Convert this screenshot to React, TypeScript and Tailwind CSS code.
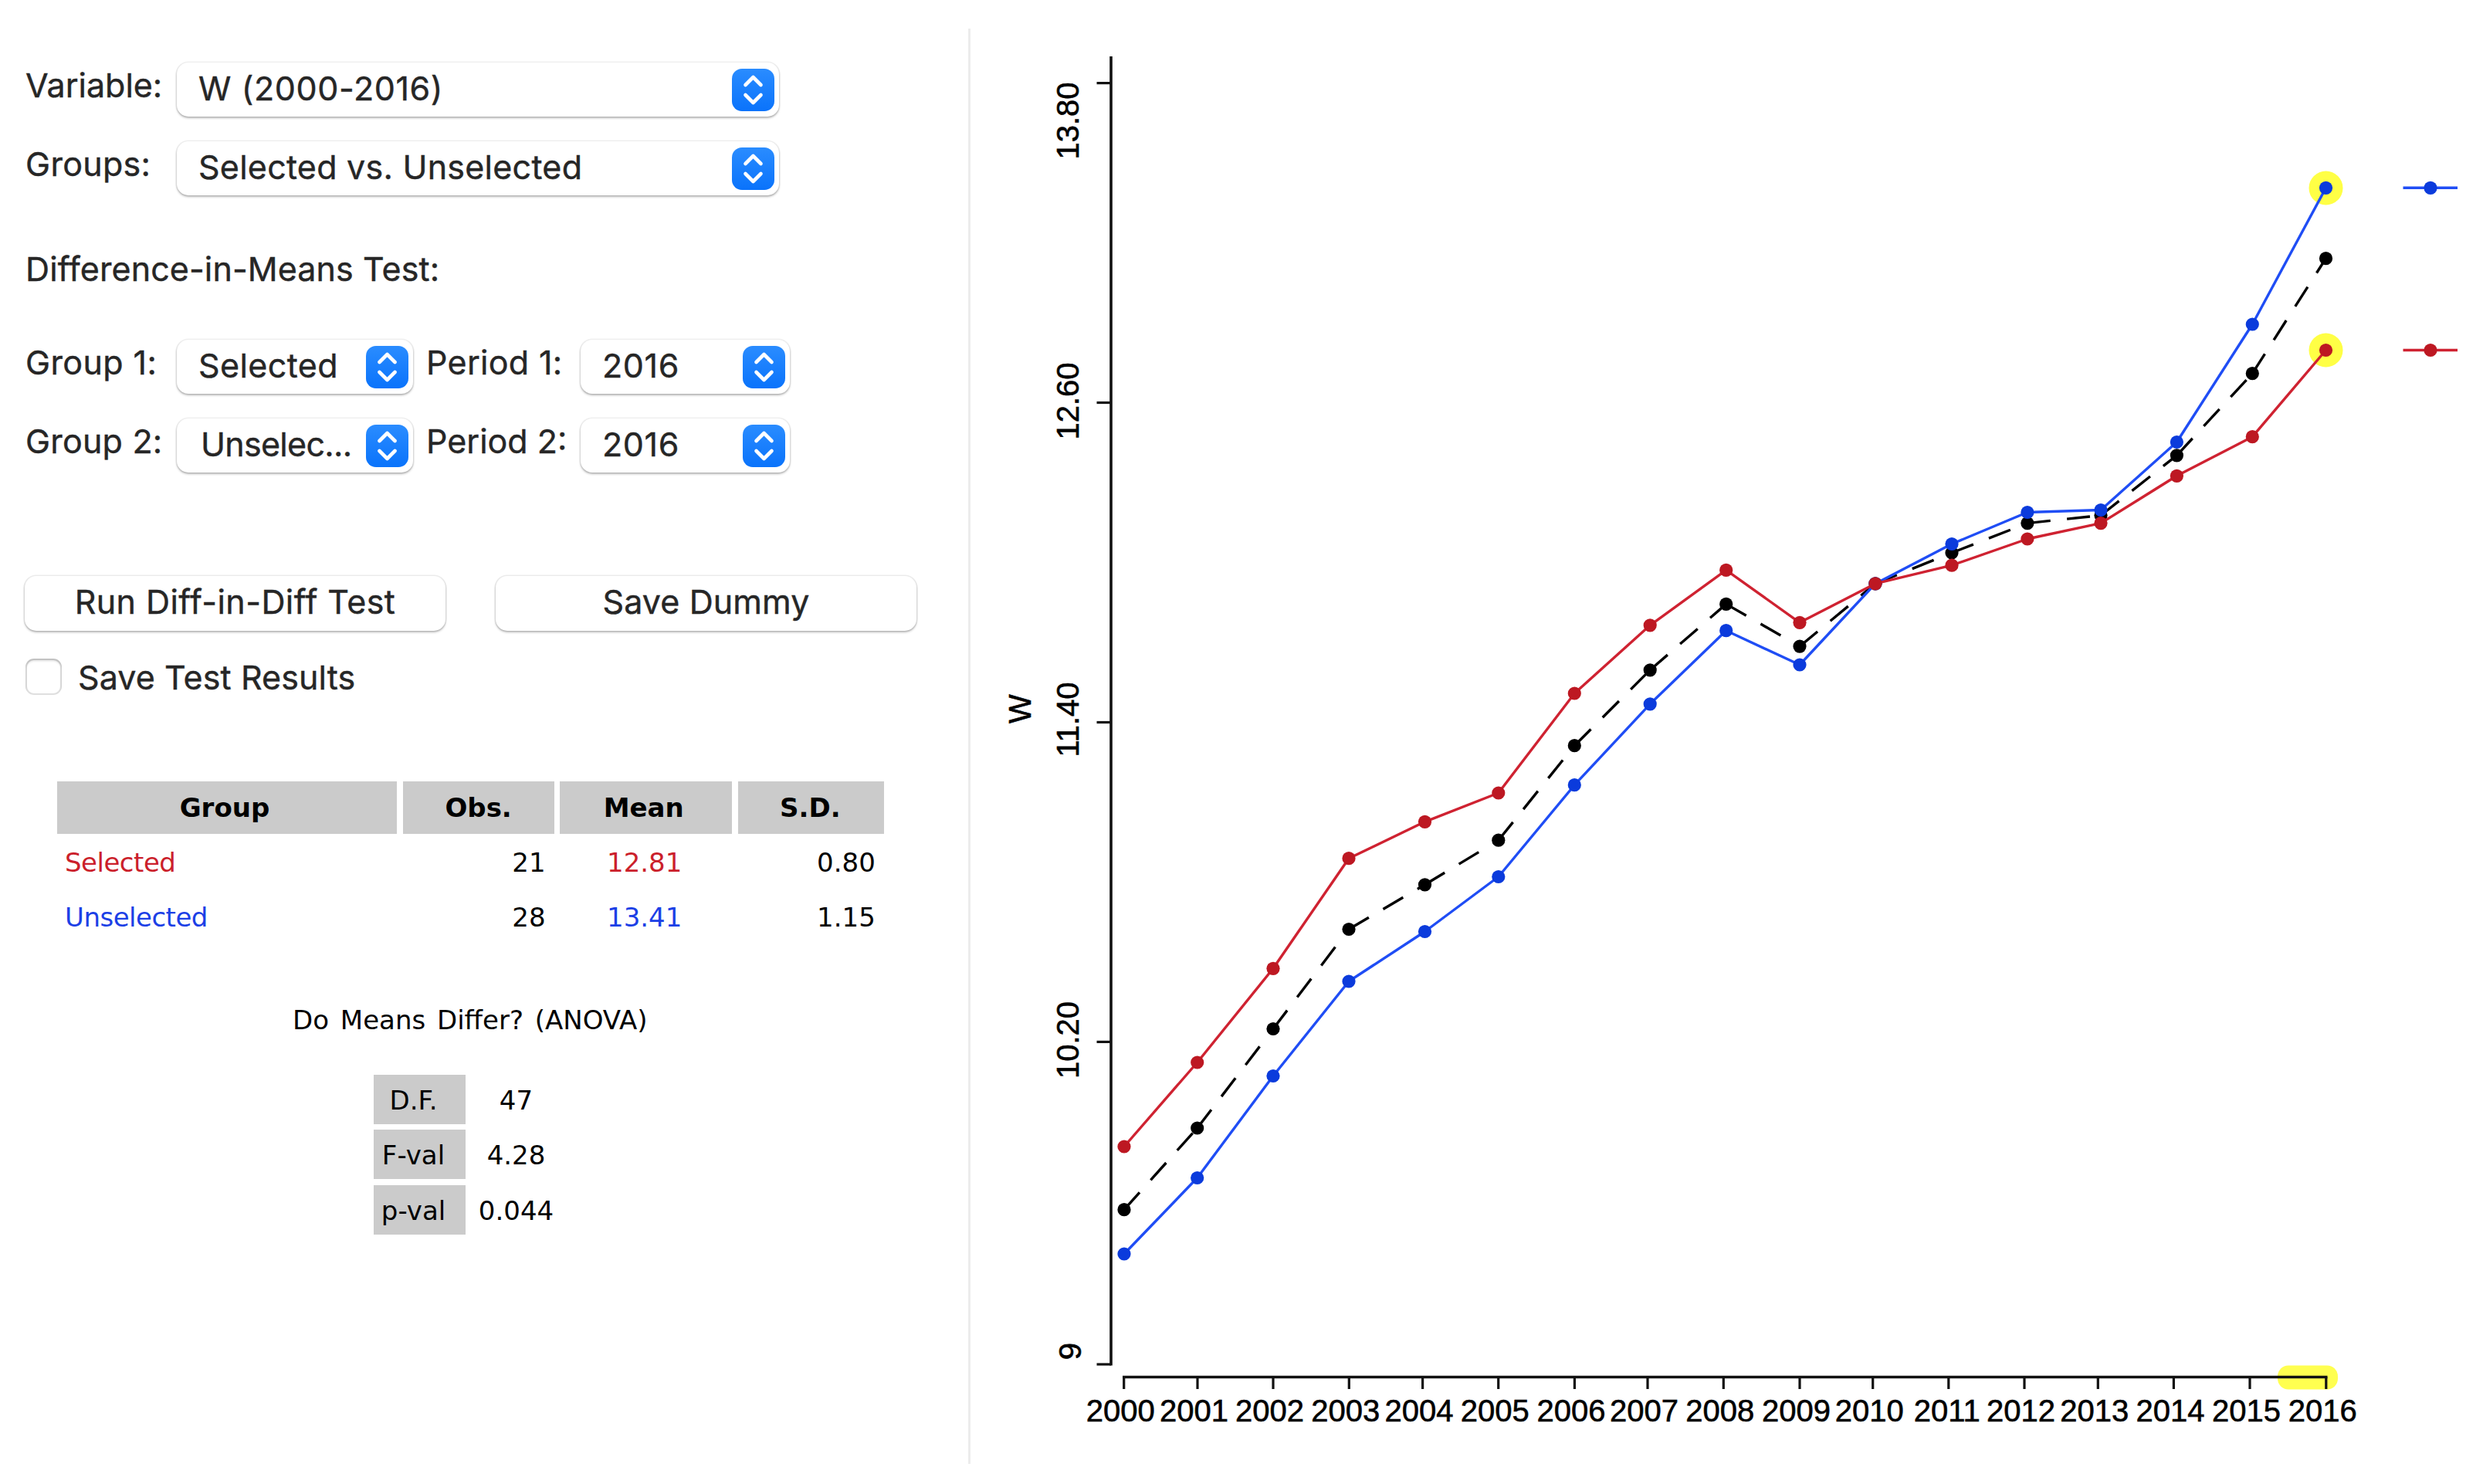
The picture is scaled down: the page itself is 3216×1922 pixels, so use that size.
import React, { FC, ReactNode } from "react";

const years = [
  { label: "2000", x: 1456, tick: 1455.7, selected: 1485, all: 1566.7, unselected: 1624 },
  { label: "2001", x: 1550.7, tick: 1551, selected: 1376, all: 1461, unselected: 1525.5 },
  { label: "2002", x: 1649, tick: 1649, selected: 1254.3, all: 1332.5, unselected: 1393.5 },
  { label: "2003", x: 1747, tick: 1747.3, selected: 1111.7, all: 1203.5, unselected: 1271 },
  { label: "2004", x: 1845.5, tick: 1842.6, selected: 1064.3, all: 1145.8, unselected: 1206.5 },
  { label: "2005", x: 1940.8, tick: 1940.7, selected: 1027, all: 1088.2, unselected: 1135.5 },
  { label: "2006", x: 2039.3, tick: 2039.4, selected: 898, all: 965.7, unselected: 1016.7 },
  { label: "2007", x: 2137.2, tick: 2134, selected: 809.8, all: 867.8, unselected: 911.8 },
  { label: "2008", x: 2235.7, tick: 2232.3, selected: 738.4, all: 782.4, unselected: 816.7 },
  { label: "2009", x: 2331, tick: 2331, selected: 806.3, all: 837.1, unselected: 861 },
  { label: "2010", x: 2429, tick: 2425.7, selected: 755.9, all: 755.9, unselected: 755.9 },
  { label: "2011", x: 2528, tick: 2523.8, selected: 732.2, all: 716, unselected: 704.5 },
  { label: "2012", x: 2625.9, tick: 2622, selected: 698, all: 677.6, unselected: 663.5 },
  { label: "2013", x: 2721, tick: 2717.3, selected: 677.6, all: 667.5, unselected: 660.5 },
  { label: "2014", x: 2819.4, tick: 2815.4, selected: 616.3, all: 589.8, unselected: 572.5 },
  { label: "2015", x: 2917.3, tick: 2914, selected: 565.7, all: 483.7, unselected: 420 },
  { label: "2016", x: 3012.5, tick: 3012.8, selected: 453.5, all: 334.7, unselected: 243.3 },
];

const yTicks = [
  { label: "13.80", y: 107.6, textY: 156.5, baseline: 1396.5 },
  { label: "12.60", y: 521.5, textY: 519.5, baseline: 1396.5 },
  { label: "11.40", y: 935.5, textY: 932, baseline: 1396.5 },
  { label: "10.20", y: 1349.4, textY: 1347, baseline: 1396.5 },
  { label: "9", y: 1767, textY: 1750, baseline: 1399.5 },
];

const rows = [
  { group: "Selected", obs: "21", mean: "12.81", sd: "0.80", color: "text-[#cb1f2b]" },
  { group: "Unselected", obs: "28", mean: "13.41", sd: "1.15", color: "text-[#1c40e6]" },
];

const anova = [
  { name: "D.F.", value: "47" },
  { name: "F-val", value: "4.28" },
  { name: "p-val", value: "0.044" },
];

interface SelectProps {
  className?: string;
  value: string;
}

const Select: FC<SelectProps> = ({ className = "", value }) => {
  return (
    <div
      className={`${className} flex h-[70px] items-center justify-between rounded-[15px] bg-white pr-1.5 shadow-[0_0_0_1.5px_#0000000f,0_2px_3px_#00000045]`}
    >
      <span className="pb-[5px] whitespace-nowrap">{value}</span>
      <svg width="55" height="55" viewBox="0 0 55 55" className="shrink-0">
        <defs>
          <linearGradient id="knob" x1="0" y1="0" x2="0" y2="1">
            <stop offset="0" stopColor="#2a8cff" />
            <stop offset="1" stopColor="#0a73fb" />
          </linearGradient>
        </defs>
        <rect width="55" height="55" rx="13" fill="url(#knob)" />
        <path
          d="M17.5 21 L27.5 11 L37.5 21 M17.5 34 L27.5 44 L37.5 34"
          fill="none"
          stroke="#fff"
          strokeWidth="4.6"
          strokeLinecap="round"
          strokeLinejoin="round"
        />
      </svg>
    </div>
  );
};

const Label: FC<{ className?: string; children: ReactNode }> = ({ className = "", children }) => {
  return <span className={`${className} h-[70px] leading-[59px] whitespace-nowrap`}>{children}</span>;
};

const Button: FC<{ className?: string; children: ReactNode }> = ({ className = "", children }) => {
  return (
    <button
      className={`${className} h-[71px] w-[545px] rounded-[15px] bg-white pb-1.5 shadow-[0_0_0_1.5px_#00000012,0_2px_3px_#00000040]`}
    >
      {children}
    </button>
  );
};

interface SeriesProps {
  field: "selected" | "all" | "unselected";
  line: string;
  dot: string;
  dash?: string;
}

// every segment is its own line, so the dash pattern restarts at each year
const Series: FC<SeriesProps> = ({ field, line, dot, dash }) => {
  return (
    <g>
      {years.slice(1).map((p, i) => (
        <line
          key={p.label}
          x1={years[i].x}
          y1={years[i][field]}
          x2={p.x}
          y2={p[field]}
          stroke={line}
          strokeWidth="3.4"
          strokeDasharray={dash}
        />
      ))}
      {years.map((p) => (
        <circle key={p.label} cx={p.x} cy={p[field]} r="8.6" fill={dot} />
      ))}
    </g>
  );
};

const Chart: FC = () => {
  return (
    <svg
      width="1959"
      height="1922"
      viewBox="1257 0 1959 1922"
      className="shrink-0 font-['Liberation_Sans',Arial,sans-serif] text-[40px]"
    >
      <rect x="2950" y="1768.5" width="78" height="31" rx="14" fill="#ffff50" />
      <circle cx="3012.5" cy="243.5" r="22" fill="#ffff45" />
      <circle cx="3012.5" cy="453.5" r="22" fill="#ffff45" />

      <g stroke="#111" strokeWidth="3.6">
        <line x1="1439" y1="73" x2="1439" y2="1768.5" />
        <line x1="1454" y1="1783.5" x2="3014.5" y2="1783.5" />
      </g>
      <g stroke="#111" strokeWidth="3.2">
        {yTicks.map((t) => (
          <line key={t.label} x1="1420.5" y1={t.y} x2="1439" y2={t.y} />
        ))}
        {years.map((t) => (
          <line key={t.label} x1={t.tick} y1="1783.5" x2={t.tick} y2="1799" />
        ))}
      </g>

      <g fill="#000" stroke="#000" strokeWidth="0.6">
        {yTicks.map((t) => (
          <text
            key={t.label}
            transform={`translate(${t.baseline} ${t.textY}) rotate(-90)`}
            textAnchor="middle"
          >
            {t.label}
          </text>
        ))}
        {years.map((t) => (
          <text
            key={t.label}
            x={t.label === "2011" ? t.tick - 2 : t.tick - 4.5}
            y="1841.3"
            textAnchor="middle"
          >
            {t.label}
          </text>
        ))}
        <text transform="translate(1335 918) rotate(-90)" textAnchor="middle">
          W
        </text>
      </g>

      <Series field="all" line="#000" dot="#000" dash="30 21.5" />
      <Series field="unselected" line="#1f4df5" dot="#0b3bdc" />
      <Series field="selected" line="#cf2231" dot="#bd1822" />

      <line x1="3112.5" y1="243.3" x2="3183" y2="243.3" stroke="#1f4df5" strokeWidth="3.4" />
      <circle cx="3148" cy="243.3" r="8.6" fill="#0b3bdc" />
      <line x1="3112.5" y1="453.5" x2="3183" y2="453.5" stroke="#cf2231" strokeWidth="3.4" />
      <circle cx="3148" cy="453.5" r="8.6" fill="#bd1822" />
    </svg>
  );
};

const ResultsTable: FC = () => {
  return (
    <div className="ml-[41px] w-[1071px]">
      <div className="grid h-[65px] grid-cols-[440px_196px_223px_189px] gap-x-[7.6px] text-center leading-[68px] font-bold">
        <div className="bg-[#cbcbcb] pr-1.5">Group</div>
        <div className="bg-[#cbcbcb]">Obs.</div>
        <div className="bg-[#cbcbcb] pr-1.5">Mean</div>
        <div className="bg-[#cbcbcb] pr-0.5">S.D.</div>
      </div>
      {rows.map((row) => (
        <div
          key={row.group}
          className="grid h-[71.3px] grid-cols-[440px_196px_223px_189px] gap-x-[7.6px] leading-[80px]"
        >
          <div className={`${row.color} pl-2.5 tracking-[-0.5px]`}>{row.group}</div>
          <div className="pr-[11px] text-right">{row.obs}</div>
          <div className={`${row.color} pr-1 text-center`}>{row.mean}</div>
          <div className="pr-[11px] text-right">{row.sd}</div>
        </div>
      ))}
    </div>
  );
};

export default function App() {
  return (
    <div className="flex h-[1922px] w-[3216px] overflow-hidden bg-white">
      <div className="h-full w-[1254px] shrink-0 pt-[81px] pl-[33px] font-[Inter,sans-serif] text-[43px] leading-[60px] text-[#262626] [-webkit-text-stroke:0.4px]">
        <div className="flex items-center">
          <Label className="w-[196px]">Variable:</Label>
          <Select className="w-[780px] pl-7 tracking-[0.6px]" value="W (2000-2016)" />
        </div>
        <div className="mt-8 flex items-center">
          <Label className="w-[196px] tracking-[0.3px]">Groups:</Label>
          <Select className="w-[780px] pl-[28px] tracking-[0.25px]" value="Selected vs. Unselected" />
        </div>

        <h2 className="mt-[65px] h-[60px] tracking-[0.1px]">Difference-in-Means Test:</h2>

        <div className="mt-[62px] flex items-center">
          <Label className="w-[196px] tracking-[0.4px]">Group 1:</Label>
          <Select className="w-[306px] pl-[28px] tracking-[0.4px]" value="Selected" />
          <Label className="ml-[17px] w-[200px] tracking-[0.3px]">Period 1:</Label>
          <Select className="w-[271px] pl-[28px] tracking-[0.6px]" value="2016" />
        </div>
        <div className="mt-8 flex items-center">
          <Label className="w-[196px] tracking-[0.2px]">Group 2:</Label>
          <Select className="w-[306px] pl-[31px] tracking-[-0.7px]" value="Unselec..." />
          <Label className="ml-[17px] w-[200px]">Period 2:</Label>
          <Select className="w-[271px] pl-[28px] tracking-[0.6px]" value="2016" />
        </div>

        <div className="-ml-px mt-[134px] flex gap-[65px]">
          <Button className="tracking-[0.45px]">Run Diff-in-Diff Test</Button>
          <Button className="tracking-[0.1px]">Save Dummy</Button>
        </div>
        <div className="mt-[35px] flex h-12 items-center">
          <span className="size-[47px] rounded-[11px] bg-white shadow-[inset_0_0_0_2px_#00000020,inset_0_3px_3px_#00000025]" />
          <span className="ml-[21px] pt-0.5 tracking-[0.1px]">Save Test Results</span>
        </div>

        <div className="mt-28 font-['DejaVu_Sans',Verdana,sans-serif] text-[34px] text-black [-webkit-text-stroke:0px]">
          <ResultsTable />
          <p className="mt-[73px] ml-[346px] h-[56px] leading-[57px] whitespace-nowrap [word-spacing:4px]">
            Do Means Differ? (ANOVA)
          </p>
          <div className="mt-[43px] ml-[451px] flex flex-col gap-[7.5px]">
            {anova.map((item) => (
              <div key={item.name} className="flex h-16 text-center leading-[67px]">
                <div className="w-[119px] bg-[#cbcbcb] pr-4">{item.name}</div>
                <div className="w-[131px]">{item.value}</div>
              </div>
            ))}
          </div>
        </div>
      </div>
      <div className="mt-[37px] h-[1859px] w-[3px] shrink-0 bg-[#ececec]" />
      <Chart />
    </div>
  );
}
